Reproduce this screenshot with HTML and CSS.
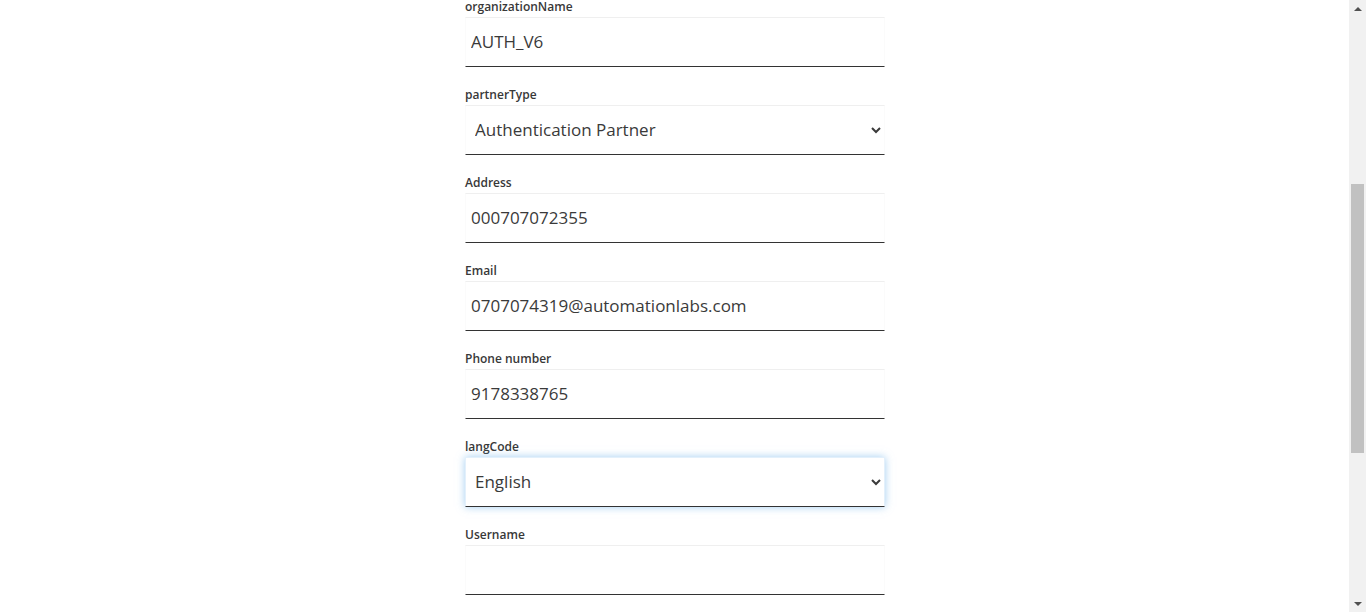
FILE: index.html
```html
<!DOCTYPE html>
<html>
<head>
<meta charset="utf-8">
<link rel="stylesheet" href="styles.css">
</head>
<body>
<div class="page">
  <main class="main">
    <form class="form">
      <div class="field">
        <label class="label">organizationName</label>
        <input class="control" type="text" value="AUTH_V6">
      </div>
      <div class="field">
        <label class="label">partnerType</label>
        <select class="control select">
          <option>Authentication Partner</option>
        </select>
      </div>
      <div class="field">
        <label class="label">Address</label>
        <input class="control" type="text" value="000707072355">
      </div>
      <div class="field">
        <label class="label">Email</label>
        <input class="control" type="text" value="0707074319@automationlabs.com">
      </div>
      <div class="field">
        <label class="label">Phone number</label>
        <input class="control" type="text" value="9178338765">
      </div>
      <div class="field">
        <label class="label">langCode</label>
        <select class="control select focused">
          <option>English</option>
        </select>
      </div>
      <div class="field">
        <label class="label">Username</label>
        <input class="control" type="text" value="">
      </div>
    </form>
  </main>
  <div class="scrollbar">
    <div class="arrow up"></div>
    <div class="track"><div class="thumb"></div></div>
    <div class="arrow down"></div>
  </div>
</div>
</body>
</html>
```
FILE: styles.css
```css
html, body {
  margin: 0;
  padding: 0;
  height: 612px;
  overflow: hidden;
  background: #fff;
}
.page {
  display: flex;
  height: 612px;
}
.main {
  flex: 1;
  display: flex;
  justify-content: center;
}
.form {
  width: 420px;
  margin-left: 1px;
  display: flex;
  flex-direction: column;
  gap: 21px;
}
.field {
  display: flex;
  flex-direction: column;
}
.label {
  display: block;
  height: 17px;
  line-height: 14px;
  font-family: "Open Sans", sans-serif;
  font-size: 12px;
  font-weight: 600;
  color: #383838;
}
.control {
  box-sizing: border-box;
  height: 50px;
  width: 420px;
  margin: 0;
  border: 1px solid #fbfbfb;
  border-top-color: #efefef;
  border-bottom: 1px solid #333;
  border-radius: 0;
  background: #fff;
  font-family: "Open Sans", sans-serif;
  font-size: 17px;
  color: #3a3a3a;
  padding: 0 5px 2px;
  outline: none;
}
.select {
  padding: 0 5px 1px;
}
.focused {
  border-color: #e3f0fb;
  border-bottom-color: #333;
  box-shadow: 0 0 8px rgba(102, 175, 233, 0.6);
}
.scrollbar {
  width: 17px;
  background: #f1f1f1;
  display: flex;
  flex-direction: column;
}
.arrow {
  height: 17px;
  display: flex;
  align-items: center;
  justify-content: center;
}
.arrow.up::before {
  content: "";
  border-left: 4px solid transparent;
  border-right: 4px solid transparent;
  border-bottom: 4px solid #505050;
}
.arrow.down::before {
  content: "";
  border-left: 4px solid transparent;
  border-right: 4px solid transparent;
  border-top: 4px solid #505050;
}
.track {
  flex: 1;
  padding-top: 167px;
}
.thumb {
  width: 13px;
  margin-left: 2px;
  height: 269px;
  background: #c1c1c1;
}
```
